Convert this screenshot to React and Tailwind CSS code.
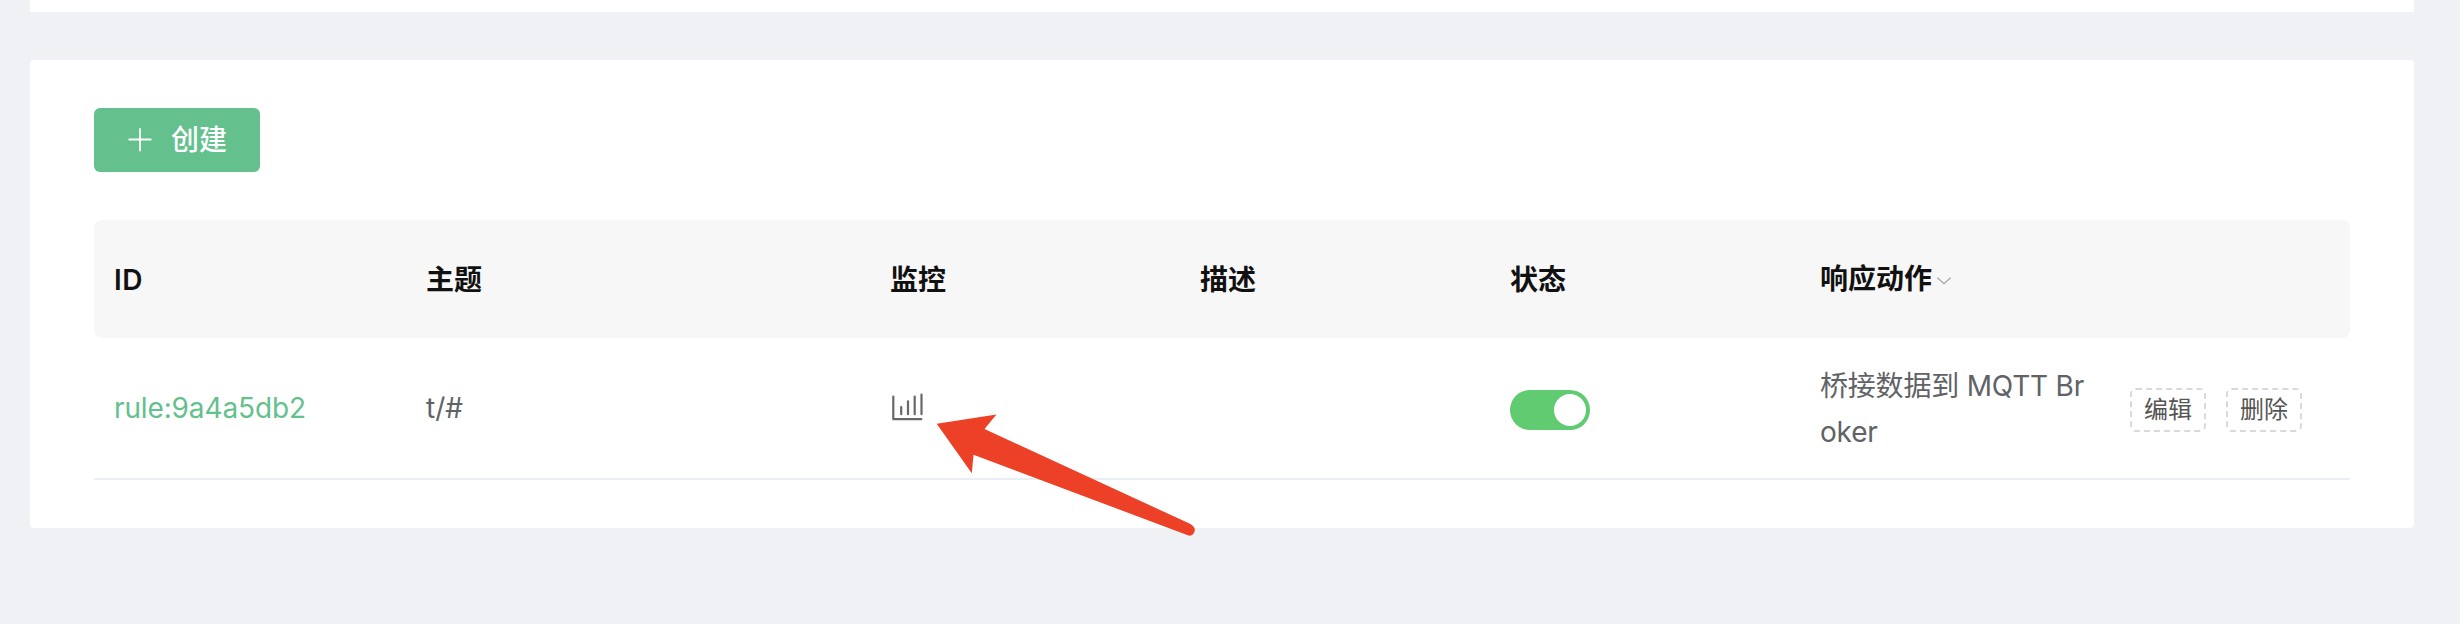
const columns = ["ID", "主题", "监控", "描述", "状态"];

const GRID = "grid grid-cols-[312px_464px_310px_310px_310px_310px_240px] items-center";

function PlusIcon() {
  return (
    <svg className="size-6" viewBox="0 0 24 24" fill="none" stroke="currentColor" strokeWidth="1.8" strokeLinecap="round">
      <path d="M12 1v21.500M1.200 11.500h21.600" />
    </svg>
  );
}

function ChartIcon() {
  return (
    <svg className="-mt-0.5 h-7 w-9" viewBox="0 0 36 28" fill="none" stroke="#66686d" strokeWidth="2.2" strokeLinecap="round" strokeLinejoin="round">
      <path d="M3.3 3.5v22.700h28M11.200 14v7.200M18 8.300v12.900M24.700 3.500v17.700M31.500 1.500v19.700" />
    </svg>
  );
}

function ChevronIcon() {
  return (
    <svg className="mt-1 ml-1 h-2 w-4" viewBox="0 0 16 8" fill="none" stroke="#a0a4aa" strokeWidth="1.2">
      <path d="M1.5 .8L8 6.600L14.500 .8" />
    </svg>
  );
}

function ActionButton({ children }) {
  return (
    <button className="flex h-11 w-[76px] items-center justify-center rounded-md border-2 border-dashed border-[#d9d9d9] text-2xl leading-none text-[#555]">
      <span className="-mt-px">{children}</span>
    </button>
  );
}

export default function App() {
  return (
    <div className="relative flex h-[624px] w-[2460px] flex-col overflow-hidden bg-[#f0f1f5] pr-[46px] pl-[30px] font-['Inter','Noto_Sans_CJK_SC',sans-serif] text-[28px] text-[#606266]">
      <div className="h-3 bg-white" />
      <section className="mt-12 h-[468px] rounded bg-white px-16 pt-12">
        <button className="flex h-16 w-[166px] items-center rounded-md bg-[#64c08d] pl-[34px] font-medium text-white">
          <PlusIcon />
          <span className="ml-[19px] leading-none">创建</span>
        </button>

        <div className={`${GRID} mt-12 h-[118px] rounded-lg bg-[#f7f7f7] font-semibold text-[#111]`}>
          {columns.map((c) => (
            <div key={c} className="pt-0.5 pl-5 first:tracking-[0.5px]">{c}</div>
          ))}
          <div className="-mt-px flex items-center pl-5">
            响应动作
            <ChevronIcon />
          </div>
        </div>

        <div className={`${GRID} h-[142px] border-b-2 border-[#ebeef5]`}>
          <div className="pl-5 tracking-[-0.13px] text-[#64c08d]">rule:9a4a5db2</div>
          <div className="pl-5">t/#</div>
          <div className="pl-5"><ChartIcon /></div>
          <div />
          <div className="pl-5">
            <div className="mt-1 flex h-10 w-20 items-center justify-end rounded-full bg-[#61cb72] pr-1">
              <div className="size-8 rounded-full bg-white" />
            </div>
          </div>
          <div className="pt-0.5 pl-5 leading-[46px] tracking-[-0.2px]">
            <div>桥接数据到 MQTT Br</div>
            <div>oker</div>
          </div>
          <div className="mt-1 flex gap-5 pl-5">
            <ActionButton>编辑</ActionButton>
            <ActionButton>删除</ActionButton>
          </div>
        </div>
      </section>

      <svg className="absolute top-[410px] left-[930px] h-[130px] w-[270px]" viewBox="930 410 270 130" fill="#ec4126">
        <path d="M936.7 423.8L996.5 414.5L984.5 429L1190 523.8Q1195.5 527 1194.7 531Q1193 536.500 1188.500 535.500L973.500 454.800L971.800 473.300Z" />
      </svg>
    </div>
  );
}
